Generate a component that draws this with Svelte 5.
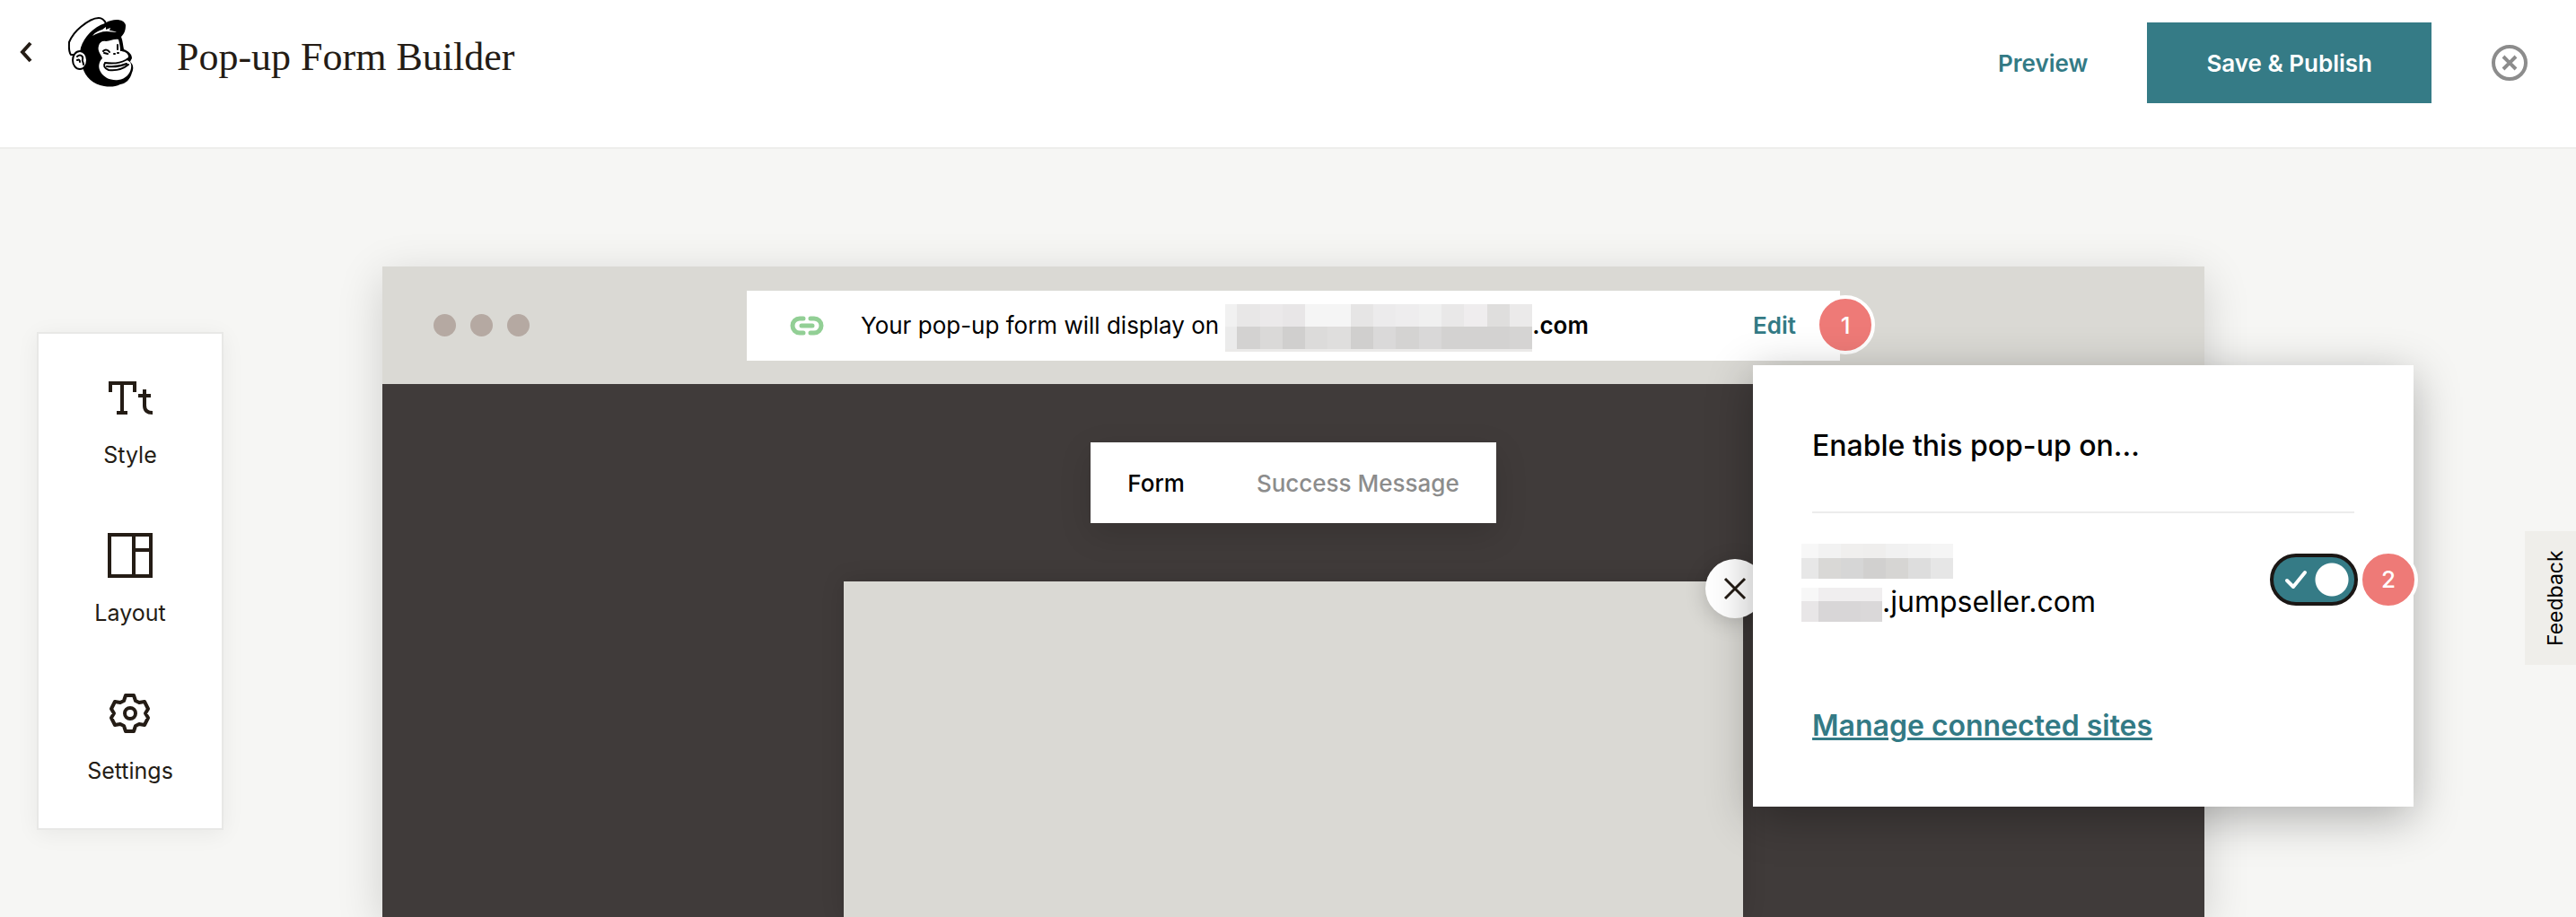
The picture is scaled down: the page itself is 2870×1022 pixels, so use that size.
<script>
    let enabled = true;
    let activeTab = "Form";

    const tabs = ["Form", "Success Message"];

    // shades of the hidden site names, one list per row
    const urlMask = [
        ["#f1f1f1", "#e8e7e7", "#ebe9ea", "#e8e6e7", "#f5f5f5", "#f5f5f5", "#e6e5e5", "#ecebec", "#eeedee", "#f0f0f0", "#e9e8e8", "#efedee", "#dfdedd", "#ebeaea"],
        ["#ebebeb", "#d3d2d1", "#dad9d8", "#d0cfce", "#dcdbda", "#dfdedd", "#d0cfce", "#dad9d9", "#d4d3d2", "#d9d8d8", "#d3d2d1", "#d3d2d1", "#d3d2d1", "#d5d4d3"]
    ];
    const nameMask = [
        ["#f7f7f7", "#f2f2f2", "#f0efee", "#efeeed", "#f1f1f1", "#f3f3f3", "#f5f5f5"],
        ["#e7e7e7", "#d9d8d6", "#d6d6d6", "#d1d0cf", "#d6d5d3", "#dddddd", "#e6e6e6"]
    ];
    const hostMask = [
        ["#f7f7f7", "#f0eeef", "#f0eeef", "#f0eeef"],
        ["#e8e6e7", "#d8d6d7", "#d8d6d7", "#dad8d9"]
    ];
</script>

<div class="page">
    <header class="header">
        <button class="back" aria-label="Back">
            <svg width="14" height="24" viewBox="0 0 14 24"><path d="M12 2 3 12l9 10" fill="none" stroke="#241c15" stroke-width="4"/></svg>
        </button>
        <svg class="logo" width="76" height="80" viewBox="0 0 76 80" aria-hidden="true">
            <path d="M4 43C1 39 2 34 2 29 5 22 10 16 15 12 21 7 28 2 35 2c4 0 6 2 8 6L16 43z" fill="#fff" stroke="#000" stroke-width="2"/>
            <path d="M42 8c4-3 9-4 13-4 5 0 9 2 10 6 0 5-1 9-5 13 2 5 2 10 3 14 5 2 9 5 9 10-1 2-2 3-2 4 4 3 4 8 2 12-2 8-7 12-13 13-6 3-12 3-18 2C29 76 20 68 17 57 14 50 13 44 15 35 19 23 29 12 42 8z" fill="#000"/>
            <path d="M35 33c1-4 4-6 8-5 5 0 9-3 14-2 1 4 2 8 2 13 4 0 9 2 9 6 0 2-1 3-2 4 4 1 6 4 5 9-1 6-6 12-14 13-8 1-16-2-20-9-3-5-2-11 2-15-1-4-6-8-4-14z" fill="#fff"/>
            <ellipse cx="14" cy="49" rx="8" ry="10" fill="#fff" stroke="#000" stroke-width="2"/>
            <path d="M11 45c3-3 7-1 6 3-1 2 1 3 1 6m-7-5c2-1 3 0 3 2" fill="none" stroke="#000" stroke-width="2" stroke-linecap="round"/>
            <path d="M40 39c2-2 5-2 7 1m-6 1 4 1M56 32v5M52 42h1m3-1h1" fill="none" stroke="#000" stroke-width="2" stroke-linecap="round"/>
            <path d="M42 52c8 1 16 1 23-3l3-2M44 56c8 1 15 0 22-3M42 52c-2 3-1 6 4 8 9 1 16-1 22-6" fill="none" stroke="#000" stroke-width="2" stroke-linecap="round"/>
            <path d="M28 22c3-4 7-6 11-7l4-3v3l5-2-1 3c3 0 6 1 8 2-4 0-7-1-11-1-6 0-11 2-16 5z" fill="#fff"/>
        </svg>
        <h1>Pop-up Form Builder</h1>
        <div class="header-actions">
            <button class="link">Preview</button>
            <button class="primary">Save &amp; Publish</button>
            <button aria-label="Close">
                <svg width="42" height="42" viewBox="0 0 42 42" fill="none" stroke="#8c8c8c" stroke-width="4"><circle cx="21" cy="21" r="18"/><path d="m14 14 14 14m0-14L14 28"/></svg>
            </button>
        </div>
    </header>

    <main class="builder">
        <nav class="tools">
            <button class="tool">
                <svg width="50" height="50" viewBox="0 0 50 50" fill="none" stroke="#241c15" stroke-width="4"><path d="M3 19V9h27v10M16 9v34M10 42h12"/><path d="M41 16v18q0 8 9 8M34 23h14"/></svg>
                Style
            </button>
            <button class="tool">
                <svg width="50" height="50" viewBox="0 0 50 50" fill="none" stroke="#241c15" stroke-width="4"><path d="M2 2h46v46H2zM29 2v46M29 19h19"/></svg>
                Layout
            </button>
            <button class="tool">
                <svg width="50" height="50" viewBox="0 0 50 50" fill="none" stroke="#241c15" stroke-width="4" stroke-linejoin="round"><path d="M20 5h9l2 6 4 2 6-1 4 8-3 5 3 5-4 8-6-1-4 2-2 6h-9l-2-6-4-2-6 1-4-8 3-5-3-5 4-8 6 1 4-2z"/><circle cx="25" cy="25" r="6"/></svg>
                Settings
            </button>
        </nav>

        <section class="browser">
            <div class="browser-bar">
                <div class="dots"><i></i><i></i><i></i></div>
                <div class="address">
                    <svg width="38" height="22" viewBox="0 0 38 22" fill="none" stroke="#92cf95" stroke-width="5" stroke-linecap="round"><path d="M15 3h-4a8 8 0 0 0 0 16h4M23 3h4a8 8 0 0 1 0 16h-4M13 11h12"/></svg>
                    <p>Your pop-up form will display on</p>
                    <span class="mask url-mask">
                        {#each urlMask as row}
                            <span class="mask-row">{#each row as shade}<i style="background: {shade}"></i>{/each}</span>
                        {/each}
                    </span>
                    <strong>.com</strong>
                    <div class="edit">
                        <button class="link">Edit</button>
                        <span class="badge">1</span>
                        <div class="popover">
                            <h2>Enable this pop-up on…</h2>
                            <div class="site">
                                <label for="siteToggle">
                                    <span class="mask name-mask">
                                        {#each nameMask as row}
                                            <span class="mask-row">{#each row as shade}<i style="background: {shade}"></i>{/each}</span>
                                        {/each}
                                    </span>
                                    <span class="host">
                                        <span class="mask host-mask">
                                            {#each hostMask as row}
                                                <span class="mask-row">{#each row as shade}<i style="background: {shade}"></i>{/each}</span>
                                            {/each}
                                        </span>
                                        .jumpseller.com
                                    </span>
                                </label>
                                <div class="toggle">
                                    <input type="checkbox" id="siteToggle" bind:checked={enabled}>
                                    <svg width="26" height="22" viewBox="0 0 26 22" fill="none" stroke="#fff" stroke-width="4" stroke-linecap="round" stroke-linejoin="round"><path d="m3 12 7 7L23 3"/></svg>
                                    <span class="badge">2</span>
                                </div>
                            </div>
                            <a href="#sites">Manage connected sites</a>
                        </div>
                    </div>
                </div>
            </div>

            <div class="canvas">
                <div class="tabs">
                    {#each tabs as tab}
                        <button class:active={tab === activeTab} on:click={() => activeTab = tab}>{tab}</button>
                    {/each}
                </div>
                <div class="form-preview">
                    <button class="close-form" aria-label="Close form">
                        <svg width="26" height="26" viewBox="0 0 26 26" fill="none" stroke="#241c15" stroke-width="3"><path d="m2 2 22 22m0-22L2 24"/></svg>
                    </button>
                </div>
            </div>
        </section>

        <button class="feedback">Feedback</button>
    </main>
</div>

<style>
    :global(body) {
        background-color: #f6f6f4;
        font-family: Inter, "Liberation Sans", sans-serif;
        color: #241c15;
    }

    .page {
        display: flex;
        flex-direction: column;
        height: 100vh;
        overflow: hidden;
    }

    button {
        padding: 0;
        border: none;
        background: none;
        color: inherit;
        font: inherit;
        cursor: pointer;
    }

    svg {
        display: block;
        flex: none;
    }

    h1, h2, p {
        margin: 0;
    }

    .header {
        display: flex;
        align-items: flex-start;
        padding: 14px 53px 49px 22px;
        border-bottom: 2px solid #eeeeec;
        background: #fff;
    }

    .back {
        margin-top: 32px;
    }

    .logo {
        margin: 4px 46px 0 39px;
    }

    h1 {
        margin-top: 25px;
        font: 44px/50px "Liberation Serif", serif;
    }

    .header-actions {
        display: flex;
        align-items: center;
        margin-left: auto;
        padding-top: 11px;
    }

    .link {
        color: #337a85;
        font-size: 26px;
        font-weight: 600;
    }

    .primary {
        margin: 0 66px;
        padding: 0 66px;
        height: 90px;
        background: #357b86;
        color: #fff;
        font-size: 26px;
        font-weight: 600;
    }

    .builder {
        display: grid;
        grid-template-columns: 426px 1fr 414px;
        flex: 1;
        min-height: 0;
    }

    .tools {
        display: flex;
        flex-direction: column;
        gap: 72px;
        width: 204px;
        height: max-content;
        margin: 204px 0 0 41px;
        padding: 46px 0 49px;
        border: 2px solid #e8e8e6;
        background: #fff;
        box-shadow: 0 4px 24px rgba(0, 0, 0, 0.06);
    }

    .tool {
        display: flex;
        flex-direction: column;
        align-items: center;
        gap: 24px;
        font-size: 25px;
        line-height: 30px;
    }

    .browser {
        display: flex;
        flex-direction: column;
        margin-top: 131px;
        background: #403b3a;
        box-shadow: 0 12px 48px rgba(0, 0, 0, 0.16);
    }

    .browser-bar {
        position: relative;
        z-index: 1;
        display: flex;
        align-items: center;
        height: 131px;
        background: #dad9d4;
    }

    .dots {
        display: flex;
        gap: 16px;
        width: 20%;
        padding-left: 57px;
        box-sizing: border-box;
    }

    .dots i {
        width: 25px;
        height: 25px;
        border-radius: 50%;
        background: #b5a9a2;
    }

    .address {
        display: flex;
        align-items: center;
        width: 60%;
        height: 78px;
        box-sizing: border-box;
        padding: 0 49px 0 48px;
        background: #fff;
        font-size: 26px;
        color: #000;
    }

    .address p {
        margin: 0 7px 0 41px;
    }

    .address strong {
        font-weight: 600;
    }

    .mask, .mask-row {
        display: flex;
    }

    .mask {
        flex-direction: column;
    }

    .mask-row, .mask-row i {
        flex: 1;
    }

    .mask-row i:first-child {
        flex: 0 0 19px;
    }

    .name-mask .mask-row:last-child, .host-mask .mask-row:last-child {
        flex: 1.5;
    }

    .url-mask {
        width: 342px;
        height: 50px;
        margin-top: 6px;
        border-bottom: 3px solid #ebeae9;
    }

    .url-mask i:first-child {
        flex: 0 0 13px;
    }

    .edit {
        position: relative;
        margin-left: auto;
    }

    .badge {
        position: absolute;
        display: flex;
        align-items: center;
        justify-content: center;
        width: 58px;
        height: 58px;
        border: 4px solid #fff;
        border-radius: 50%;
        background: #ee7a77;
        color: #fff;
        font-size: 26px;
        font-weight: 500;
    }

    .edit > .badge {
        top: -18px;
        left: 70px;
    }

    .popover {
        position: absolute;
        top: 60px;
        left: 0;
        width: 736px;
        box-sizing: border-box;
        padding: 66px;
        background: #fff;
        box-shadow: 0 12px 48px rgba(0, 0, 0, 0.3);
        font-size: 32px;
        line-height: 48px;
    }

    h2 {
        padding-bottom: 49px;
        border-bottom: 2px solid #ececec;
        font-size: 32px;
        font-weight: 500;
        line-height: 48px;
    }

    .site {
        display: flex;
        justify-content: space-between;
        padding: 34px 0 92px;
    }

    .site label {
        margin-left: -12px;
    }

    .name-mask {
        width: 169px;
        height: 39px;
        margin-bottom: 10px;
    }

    .host {
        display: flex;
        font-size: 32px;
        line-height: 32px;
    }

    .host-mask {
        width: 90px;
        height: 38px;
    }

    .toggle {
        position: relative;
        margin: 11px -4px 0 0;
    }

    .toggle input {
        display: block;
        appearance: none;
        width: 98px;
        height: 58px;
        margin: 0;
        border: 4px solid #1b1715;
        border-radius: 29px;
        background: radial-gradient(circle at 65px 25px, #fff 18px, transparent 19px) #357b86;
    }

    .toggle svg {
        position: absolute;
        top: 18px;
        left: 16px;
    }

    .toggle .badge {
        top: -4px;
        left: 99px;
    }

    .popover a {
        color: #337a85;
        font-weight: 600;
        text-decoration-thickness: 3px;
    }

    .canvas {
        display: flex;
        flex: 1;
        flex-direction: column;
        align-items: center;
        padding-top: 65px;
    }

    .tabs {
        display: flex;
        gap: 80px;
        padding: 0 41px;
        background: #fff;
        box-shadow: 0 12px 36px rgba(0, 0, 0, 0.14);
    }

    .tabs button {
        height: 90px;
        color: #8c8c8c;
        font-size: 26px;
        font-weight: 500;
    }

    .tabs .active {
        color: #000;
    }

    .form-preview {
        position: relative;
        flex: 1;
        width: 100%;
        max-width: 1002px;
        margin-top: 65px;
        background: #dad9d4;
        box-shadow: 0 0 24px rgba(0, 0, 0, 0.14);
    }

    .close-form {
        position: absolute;
        top: -25px;
        right: -24px;
        display: flex;
        align-items: center;
        justify-content: center;
        width: 66px;
        height: 66px;
        border-radius: 50%;
        background: #fff;
        box-shadow: 0 4px 24px rgba(0, 0, 0, 0.2);
    }

    .feedback {
        justify-self: end;
        width: 57px;
        height: 149px;
        margin-top: 426px;
        padding-right: 10px;
        background: #efeeea;
        color: #000;
        font-size: 23px;
        writing-mode: vertical-rl;
        rotate: 180deg;
    }
</style>
